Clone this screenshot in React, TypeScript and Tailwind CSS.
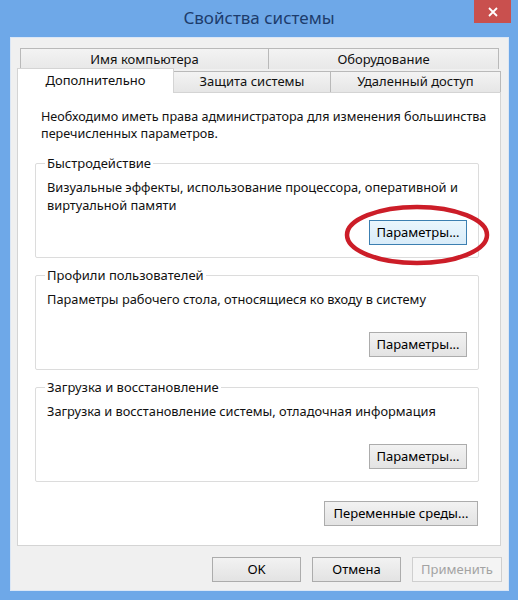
import clsx from "clsx";

const Btn = ({ children, className, focused, disabled }: { children: React.ReactNode; className?: string; focused?: boolean; disabled?: boolean }) => (
    <div
        className={clsx(
            "h-[25px] flex items-center justify-center border text-[13px] whitespace-nowrap",
            focused && "border-[#3c7fb1] bg-gradient-to-b from-[#eaf6fd] to-[#d9ecf9] text-black",
            disabled && "border-[#cfcfcf] bg-[#f4f4f4] text-[#a3a3a3]",
            !focused && !disabled && "border-[#acacac] bg-gradient-to-b from-[#f2f2f2] to-[#e3e3e3] text-black",
            className
        )}
    >
        {children}
    </div>
);

const Group = ({ label, lines, className, focused }: { label: string; lines: string[]; className?: string; focused?: boolean }) => (
    <div className={clsx("ml-[17px] w-[444px] h-[95px] border border-[#dcdcdc] rounded-[2px] flex flex-col px-[11px] pb-[12px]", className)}>
        <div className="-mt-[9px] leading-[16px]">
            <span className="bg-white px-[2px] -ml-[2px]">{label}</span>
        </div>
        <div className="mt-[7px] leading-[18px] text-[12.8px] whitespace-nowrap">
            {lines.map((l) => (
                <div key={l}>{l}</div>
            ))}
        </div>
        <div className="mt-auto flex justify-end">
            <Btn className="w-[98px]" focused={focused}>Параметры...</Btn>
        </div>
    </div>
);

export default function App() {
    return (
        <div className="relative w-[518px] h-[600px] bg-[#6ea8e8] flex flex-col font-['Noto_Sans','Open_Sans',sans-serif] text-[13px] text-[#111]">
            {/* Title bar */}
            <div className="h-[37px] flex items-start">
                <div className="flex-1 h-[37px] flex items-center justify-center pb-[2px] text-[17px] text-[#1d3c6c]">Свойства системы</div>
                <div className="absolute right-[7px] top-0 w-[37px] h-[23px] bg-[#c9504e] flex items-center justify-center">
                    <svg width="10" height="10" viewBox="0 0 10 10">
                        <path d="M1 1 L9 9 M9 1 L1 9" stroke="white" strokeWidth="1.8" />
                    </svg>
                </div>
            </div>

            {/* Client area */}
            <div className="ml-[10px] w-[499px] h-[554px] bg-[#f0f0f0] border border-[#dbe7f6] pt-[10px] pl-[6px]">
                {/* Tabs row 1 */}
                <div className="ml-[3px] flex h-[21px]">
                    <div className="w-[249px] h-[21px] border border-b-0 border-[#b9b9b9] bg-gradient-to-b from-[#f3f3f3] to-[#e8e8e8] flex items-center justify-center pt-[2px]">Имя компьютера</div>
                    <div className="-ml-px w-[231px] h-[21px] border border-b-0 border-[#b9b9b9] bg-gradient-to-b from-[#f3f3f3] to-[#e8e8e8] flex items-center justify-center pt-[2px]">Оборудование</div>
                </div>
                {/* Tabs row 2 */}
                <div className="flex h-[24px] items-start -mt-px">
                    <div className="relative z-10 w-[157px] h-[25px] border border-b-0 border-[#d4d4d4] bg-white flex items-center justify-center">Дополнительно</div>
                    <div className="-ml-px mt-[3px] w-[158px] h-[21px] border border-b-0 border-[#b9b9b9] bg-gradient-to-b from-[#f3f3f3] to-[#e6e6e6] flex items-center justify-center">Защита системы</div>
                    <div className="-ml-px mt-[3px] w-[171px] h-[21px] border border-b-0 border-[#b9b9b9] bg-gradient-to-b from-[#f3f3f3] to-[#e6e6e6] flex items-center justify-center">Удаленный доступ</div>
                </div>

                {/* Panel */}
                <div className="w-[484px] h-[454px] border border-[#d4d4d4] bg-white">
                    <p className="pl-[23px] pt-[15px] leading-[17px] text-[12.6px] whitespace-nowrap">
                        Необходимо иметь права администратора для изменения большинства
                        <br />
                        перечисленных параметров.
                    </p>
                    <Group
                        className="mt-[21px]"
                        label="Быстродействие"
                        lines={["Визуальные эффекты, использование процессора, оперативной и", "виртуальной памяти"]}
                        focused
                    />
                    <Group className="mt-[17px]" label="Профили пользователей" lines={["Параметры рабочего стола, относящиеся ко входу в систему"]} />
                    <Group className="mt-[17px]" label="Загрузка и восстановление" lines={["Загрузка и восстановление системы, отладочная информация"]} />
                    <div className="mt-[19px] flex justify-end pr-[22px]">
                        <Btn className="w-[154px]">Переменные среды...</Btn>
                    </div>
                </div>

                {/* Dialog buttons */}
                <div className="mt-[11px] flex justify-end gap-[11px] pr-[6px]">
                    <Btn className="w-[89px]">OK</Btn>
                    <Btn className="w-[89px]">Отмена</Btn>
                    <Btn className="w-[90px]" disabled>Применить</Btn>
                </div>
            </div>

            {/* Red annotation ring */}
            <svg className="absolute left-[343px] top-[203px]" width="148" height="64" viewBox="0 0 148 64">
                <ellipse cx="74" cy="32" rx="70" ry="28" fill="none" stroke="#cc1d28" strokeWidth="4.5" />
            </svg>
        </div>
    );
}
